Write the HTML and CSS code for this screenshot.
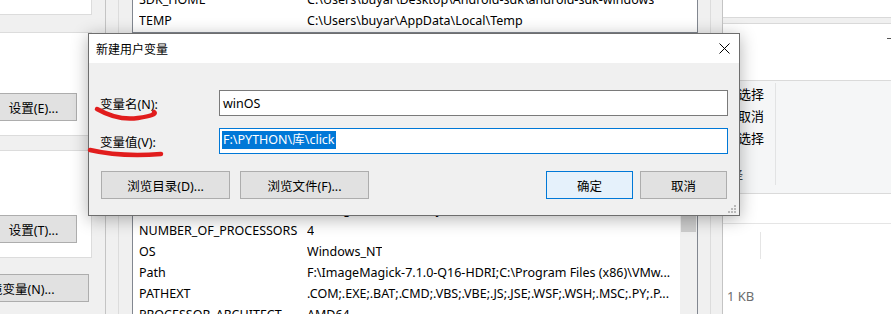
FILE: index.html
```html
<!DOCTYPE html>
<html lang="zh-CN">
<head>
  <meta charset="UTF-8">
  <meta name="viewport" content="width=device-width, initial-scale=1.0">
  <title>新建用户变量</title>
  <link rel="stylesheet" href="styles.css">
</head>
<body>
  <div class="desktop">
    <!-- system properties window (behind) -->
    <div class="sysprops">
      <div class="tab-top"></div>
      <div class="group group-profile">
        <button class="btn btn-side">设置(E)...</button>
      </div>
      <div class="group group-startup">
        <button class="btn btn-side">设置(T)...</button>
      </div>
      <button class="btn btn-env">环境变量(N)...</button>
    </div>

    <!-- environment variables window -->
    <div class="envvars">
      <div class="frame">
        <div class="list list-user">
          <div class="row"><span class="name">SDK_HOME</span><span class="value">C:\Users\buyar\Desktop\Android-sdk\android-sdk-windows</span></div>
          <div class="row"><span class="name">TEMP</span><span class="value">C:\Users\buyar\AppData\Local\Temp</span></div>
        </div>
        <div class="list list-system">
          <div class="rows">
            <div class="list-head"></div>
            <div class="row"></div>
            <div class="row"></div>
            <div class="row"><span class="name">JAVA_HOME</span><span class="value">C:\Program Files\Java\jdk1.8.0_281</span></div>
            <div class="row"><span class="name">NUMBER_OF_PROCESSORS</span><span class="value">4</span></div>
            <div class="row"><span class="name">OS</span><span class="value">Windows_NT</span></div>
            <div class="row"><span class="name">Path</span><span class="value">F:\ImageMagick-7.1.0-Q16-HDRI;C:\Program Files (x86)\VMw...</span></div>
            <div class="row"><span class="name">PATHEXT</span><span class="value">.COM;.EXE;.BAT;.CMD;.VBS;.VBE;.JS;.JSE;.WSF;.WSH;.MSC;.PY;.P...</span></div>
            <div class="row"><span class="name">PROCESSOR_ARCHITECT...</span><span class="value">AMD64</span></div>
          </div>
          <div class="scrollbar"><div class="thumb"></div></div>
        </div>
      </div>
    </div>

    <!-- file explorer window -->
    <div class="explorer">
      <div class="ex-titlebar"></div>
      <div class="ex-strip"></div>
      <div class="ex-tabs"><span class="ex-collapse"></span></div>
      <div class="ribbon">
        <div class="ribbon-group">
          <div class="ribbon-items">
            <span>全部选择</span>
            <span>全部取消</span>
            <span>反向选择</span>
          </div>
          <div class="ribbon-label">选择</div>
        </div>
      </div>
      <div class="addressbar"></div>
      <div class="ex-header"><span class="col-sep"></span></div>
      <div class="ex-row"></div>
      <div class="ex-row">1 KB</div>
      <div class="ex-row">1 KB</div>
    </div>
  </div>

  <!-- new user variable dialog -->
  <div class="dialog">
    <div class="dlg-title">
      <span>新建用户变量</span>
      <svg class="close" width="11" height="11" viewBox="0 0 11 11">
        <path d="M0.5 0.5 L10.5 10.5 M10.5 0.5 L0.5 10.5" stroke="#000" stroke-width="1" fill="none"/>
      </svg>
    </div>
    <div class="dlg-body">
      <div class="field">
        <label class="field-label" for="var-name">变量名(N):</label>
        <div class="input" id="var-name">winOS</div>
      </div>
      <div class="field">
        <label class="field-label" for="var-value">变量值(V):</label>
        <div class="input input-focus" id="var-value"><span class="sel">F:\PYTHON\库\click</span></div>
      </div>
      <div class="actions">
        <button class="btn btn-browse">浏览目录(D)...</button>
        <button class="btn btn-browse">浏览文件(F)...</button>
        <span class="spacer"></span>
        <button class="btn btn-default">确定</button>
        <button class="btn">取消</button>
      </div>
    </div>
    <svg class="grip" width="8" height="8" viewBox="0 0 8 8">
      <rect x="6" y="0" width="2" height="2" fill="#b9b9b9"/>
      <rect x="3" y="3" width="2" height="2" fill="#b9b9b9"/>
      <rect x="6" y="3" width="2" height="2" fill="#b9b9b9"/>
      <rect x="0" y="6" width="2" height="2" fill="#b9b9b9"/>
      <rect x="3" y="6" width="2" height="2" fill="#b9b9b9"/>
      <rect x="6" y="6" width="2" height="2" fill="#b9b9b9"/>
    </svg>
  </div>

  <!-- red marker annotations -->
  <svg class="marks" width="891" height="314" viewBox="0 0 891 314">
    <path d="M97 109 Q 118 121 138 118 T 154 112" stroke="#e11d1d" stroke-width="4.5" stroke-linecap="round" fill="none"/>
    <path d="M90 150 Q 120 157 161 154" stroke="#e11d1d" stroke-width="4.5" stroke-linecap="round" fill="none"/>
  </svg>
</body>
</html>
```

FILE: styles.css
```css
* {
  box-sizing: border-box;
}
html, body {
  margin: 0;
}
body {
  width: 891px;
  height: 314px;
  overflow: hidden;
  position: relative;
  font-family: "Noto Sans", "Noto Sans CJK SC", sans-serif;
  font-size: 12.5px;
  color: #000;
  background: #f0f0f0;
}
.desktop {
  display: flex;
  height: 314px;
  overflow: hidden;
}

/* buttons */
.btn {
  font-family: inherit;
  font-size: 12.5px;
  color: #000;
  background: #e1e1e1;
  border: 1px solid #adadad;
  height: 28px;
  width: 87px;
  padding: 0;
  white-space: nowrap;
  flex: none;
}
.btn-default {
  background: #e5f1fb;
  border: 1px solid #0078d7;
}

/* system properties */
.sysprops {
  width: 105px;
  flex: none;
  overflow: hidden;
  background: #f0f0f0;
}
.tab-top {
  width: 92px;
  height: 15px;
  background: #fff;
  border-right: 1px solid #dcdcdc;
  border-bottom: 1px solid #dcdcdc;
}
.group {
  width: 92px;
  background: #fff;
  border: 1px solid #dcdcdc;
  border-left: 0;
}
.group-profile {
  margin-top: 17px;
  height: 104px;
  padding-top: 60px;
}
.group-startup {
  margin-top: 14px;
  height: 108px;
  padding-top: 64px;
}
.btn-side {
  margin-left: -10px;
}
.btn-env {
  display: block;
  width: 146px;
  margin: 16px 0 0 -57px;
}

/* environment variables */
.envvars {
  width: 618px;
  flex: none;
  padding: 0 11px 0 12px;
  border-left: 1px solid #c4c4c4;
  border-right: 1px solid #c4c4c4;
  background: #f0f0f0;
}
.frame {
  height: 100%;
  padding: 0 12px 0 13px;
  border-left: 1px solid #dcdcdc;
  border-right: 1px solid #dcdcdc;
}
.list {
  background: #fff;
  border: 1px solid #828790;
  overflow: hidden;
}
.list-user {
  height: 33px;
  border-top: 0;
  padding-bottom: 1px;
  display: flex;
  flex-direction: column;
  justify-content: flex-end;
}
.list-system {
  margin-top: 102px;
  height: 179px;
  border-bottom: 0;
  display: flex;
}
.rows {
  flex: 1;
  min-width: 0;
}
.row, .list-head {
  display: flex;
  height: 21px;
  line-height: 21px;
  padding-left: 6px;
  white-space: nowrap;
  flex: none;
}
.list-head {
  border-bottom: 1px solid #e5e5e5;
}
.name {
  width: 168px;
  flex: none;
  padding-right: 8px;
  overflow: hidden;
  text-overflow: ellipsis;
}
.value {
  overflow: hidden;
}
.scrollbar {
  width: 17px;
  flex: none;
  background: #f0f0f0;
  padding: 79px 1px 0;
}
.thumb {
  height: 17px;
  background: #cdcdcd;
}

/* explorer */
.explorer {
  flex: 1;
  min-width: 0;
  overflow: hidden;
  background: #fff;
  font-size: 13px;
}
.ex-titlebar {
  height: 18px;
  border-bottom: 1px solid #d9d9d9;
}
.ex-strip {
  height: 6px;
  background: #f0f0f0;
  border-bottom: 1px solid #d9d9d9;
}
.ex-tabs {
  height: 57px;
  border-bottom: 1px solid #dadada;
  display: flex;
  justify-content: flex-end;
  padding-top: 14px;
}
.ex-collapse {
  width: 4px;
  height: 1px;
  background: #555;
}
.ribbon {
  height: 113px;
  background: #f5f6f7;
  border-bottom: 1px solid #dadada;
  padding-top: 2px;
}
.ribbon-group {
  width: 53px;
  height: 102px;
  border-right: 1px solid #e2e3e4;
  overflow: hidden;
}
.ribbon-items {
  display: flex;
  flex-direction: column;
  margin-left: -11px;
  line-height: 22px;
  white-space: nowrap;
}
.ribbon-label {
  margin: 15px 0 0 -6px;
  line-height: 22px;
  color: #444;
  white-space: nowrap;
}
.addressbar {
  height: 30px;
  border-bottom: 1px solid #e5e5e5;
}
.ex-header {
  height: 39px;
  padding: 8px 0 0 37px;
}
.col-sep {
  display: block;
  width: 1px;
  height: 27px;
  background: #e5e5e5;
}
.ex-row {
  height: 22px;
  line-height: 22px;
  padding-left: 4px;
  color: #6d6d6d;
}

/* dialog */
.dialog {
  position: absolute;
  left: 88px;
  top: 33px;
  width: 652px;
  height: 183px;
  border: 1px solid #6e6e6e;
  background: #f0f0f0;
  box-shadow: 0 3px 16px rgba(0, 0, 0, 0.3);
}
.dlg-title {
  height: 29px;
  background: #fff;
  display: flex;
  align-items: center;
  justify-content: space-between;
  padding: 0 9px 0 7px;
  font-size: 12px;
}
.close {
  display: block;
}
.dlg-body {
  height: 152px;
  padding: 27px 11px 16px 11px;
}
.field {
  display: flex;
  align-items: center;
  margin-bottom: 12px;
}
.field-label {
  width: 119px;
  flex: none;
}
.input {
  flex: 1;
  height: 26px;
  background: #fff;
  border: 1px solid #7a7a7a;
  padding: 0 3px;
  display: flex;
  align-items: center;
  white-space: nowrap;
}
.input-focus {
  border-color: #0078d7;
}
.sel {
  background: #0078d7;
  color: #fff;
  line-height: 18px;
  margin: -2px 0 0 -1px;
  padding: 0 1px;
}
.actions {
  display: flex;
  gap: 10px;
  margin-top: 17px;
  padding: 0 1px;
}
.btn-browse {
  width: 129px;
}
.spacer {
  flex: 1;
}
.actions .btn-default {
  margin-right: -3px;
}
.grip {
  position: absolute;
  right: 3px;
  bottom: 2px;
}

.marks {
  position: absolute;
  left: 0;
  top: 0;
  pointer-events: none;
}
```
